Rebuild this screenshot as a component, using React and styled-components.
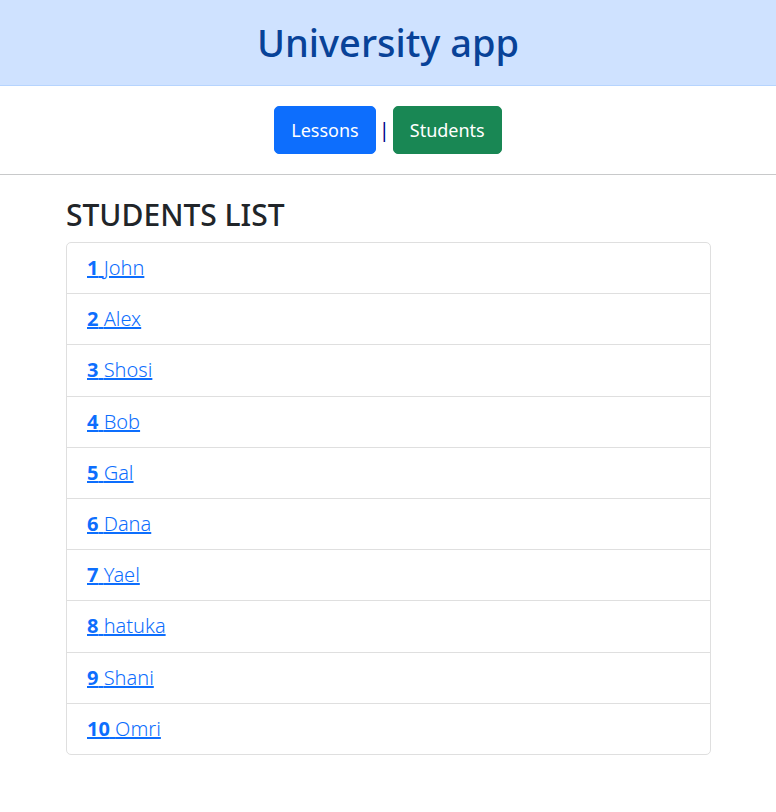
import React from "react";
import styled, { createGlobalStyle } from "styled-components";

const GlobalStyle = createGlobalStyle`
  *, *::before, *::after { box-sizing: border-box; }
  body {
    margin: 0;
    background: #fff;
    color: #212529;
    font-family: "Segoe UI", "Noto Sans", "Open Sans", sans-serif;
    font-size: 20px;
    line-height: 1.51;
  }
`;

const Header = styled.header`
  padding: 16px;
  background: #cfe2ff;
  border-bottom: 1px solid #b6d4fe;
  text-align: center;
`;

const Title = styled.h1`
  margin: 0;
  color: #084298;
  font-size: 38px;
  font-weight: 500;
  line-height: 53px;
`;

const Nav = styled.nav`
  display: flex;
  justify-content: center;
  align-items: center;
  gap: 3px;
  padding: 20px;
  border-bottom: 1px solid #c8c9ca;
  color: #00008b;
`;

const NavButton = styled.button`
  height: 48px;
  padding: 2px 16px 0;
  border: 1px solid ${(p) => p.$color};
  border-radius: 5px;
  background: ${(p) => p.$color};
  color: #fff;
  font: inherit;
  font-size: 18px;
  cursor: pointer;
`;

const Main = styled.main`
  padding: 20px 65px 56px 66px;
`;

const Heading = styled.h2`
  margin: 0 0 8px;
  font-size: 30px;
  font-weight: 500;
  line-height: 39px;
`;

const List = styled.ul`
  margin: 0;
  padding: 0;
  list-style: none;
  border: 1px solid #dfdfdf;
  border-radius: 5px;
`;

const Item = styled.li`
  padding: 10px 20px;
  & + & { border-top: 1px solid #dfdfdf; }
`;

const StudentLink = styled.a`
  color: #0d6efd;
  font-weight: 300;
  text-decoration: underline;
  text-decoration-thickness: 2px;

  strong { font-weight: 700; }
`;

const students = ["John", "Alex", "Shosi", "Bob", "Gal", "Dana", "Yael", "hatuka", "Shani", "Omri"];

export default function App() {
  return (
    <>
      <GlobalStyle />
      <Header>
        <Title>University app</Title>
      </Header>
      <Nav>
        <NavButton type="button" $color="#0d6efd">Lessons</NavButton>
        <span>|</span>
        <NavButton type="button" $color="#198754">Students</NavButton>
      </Nav>
      <Main>
        <Heading>STUDENTS LIST</Heading>
        <List>
          {students.map((name, i) => (
            <Item key={name}>
              <StudentLink href={`#student-${i + 1}`}>
                <strong>{i + 1}</strong> {name}
              </StudentLink>
            </Item>
          ))}
        </List>
      </Main>
    </>
  );
}
